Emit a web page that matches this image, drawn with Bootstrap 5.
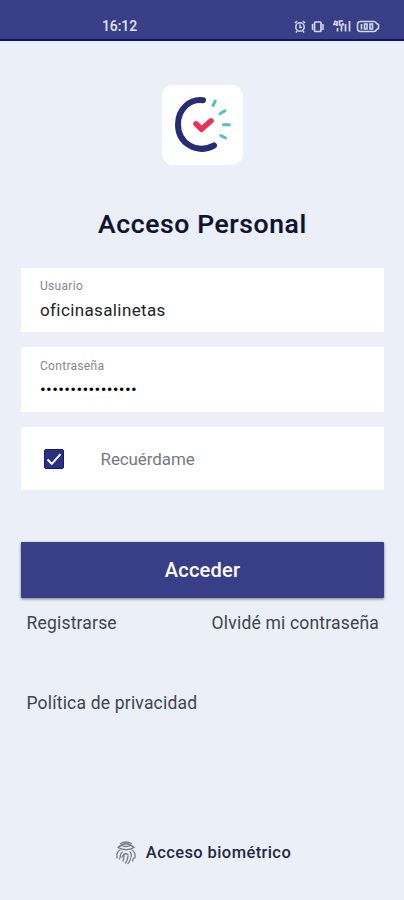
<!DOCTYPE html>
<html lang="es">
<head>
<meta charset="utf-8">
<meta name="viewport" content="width=device-width, initial-scale=1">
<title>Acceso Personal</title>
<link href="https://cdn.jsdelivr.net/npm/bootstrap@5.3.0/dist/css/bootstrap.min.css" rel="stylesheet">
<style>
body{font-family:Roboto,"Liberation Sans",sans-serif;background:#ebeff7;color:#303238;height:900px;overflow:hidden}
.status-bar{height:41px;background:#393f87;border-bottom:2px solid #120f70;color:#e2e5fa;padding:12px 24px 0 102px}
.clock{font-size:14px;line-height:29px;letter-spacing:-.1px;font-weight:500}
.status-icons{height:29px}
.app-logo{width:81px;height:80px;margin-top:44px;background:#fff;border-radius:11px}
.title{font-size:26.5px;line-height:32px;font-weight:500;letter-spacing:.62px;color:#10132e;-webkit-text-stroke:.2px #10132e;margin:43px 0 28px}
.page{padding:0 20px 0 21px}
.field{background:#fff;height:64px;padding:10px 19px 0;margin-bottom:15px}
.field + .field{height:65px;padding-top:11px}
.field label{font-size:12px;line-height:16px;color:#85878b;letter-spacing:.3px}
.field input{font-size:17px;line-height:24px;height:24px;color:#222326;letter-spacing:.38px;margin-top:4px}
.field .secret{letter-spacing:.33px;color:#000;margin-top:3px}
.remember{background:#fff;height:63px;padding:1px 23px 0}
.remember .form-check-input{width:20px;height:20px;border-radius:2px;border:1px solid #1a1875;margin:0}
.remember .form-check-input:checked{background-color:#2b3182;background-image:none}
.check-box{display:grid}
.check-box > *{grid-area:1/1}
.check-box svg{pointer-events:none;z-index:1}
.remember label{font-size:17px;letter-spacing:-.1px;color:#77797d;margin-left:36.5px;padding-top:1px}
.btn-access{height:56px;margin-top:52px;border-radius:1px;background:#393f87;color:#fff;font-size:20px;font-weight:500;letter-spacing:.2px;box-shadow:0 1px 3px #2229;--bs-btn-hover-bg:#30367b;--bs-btn-hover-color:#fff}
.links{font-size:17.5px;line-height:24px;letter-spacing:.19px;padding:0 5px 0 5.5px}
.links a,.bio{color:#424449;text-decoration:none}
.first-links{margin-top:13px}
.privacy{margin-top:56px}
.bio{margin-top:125px;padding-left:2px;font-size:16.5px;font-weight:500;line-height:26px;letter-spacing:.4px;color:#252940}
.bio svg{margin-right:10px}
</style>
</head>
<body class="d-flex flex-column">
<header class="status-bar d-flex justify-content-between flex-shrink-0">
  <span class="clock">16:12</span>
  <svg class="status-icons" width="87" height="29" viewBox="293 12 87 29" fill="none" stroke="#d5d9f4" stroke-width="1.5" aria-hidden="true">
    <circle cx="300" cy="27" r="4.2"/><path d="M300 24.500v3h2M295 23l2-2M305 23l-2-2M297 31l-1 1.500M303 31l1 1.500"/>
    <path d="M315.500 22h4.500q1 0 1 1v7.500q0 1-1 1h-4.500q-1 0-1-1v-7.500q0-1 1-1z" stroke-width="1.700"/><path d="M312.500 24v6M323 24v6"/>
    <path d="M335.500 20.500l-1.500 4h3M337 21v5M343 21h-3.500v4h3.500v-2M337.500 28v3.500M341.500 26v5.500M345.500 24v7.500M349.500 21v10.500" stroke-width="1.700"/>
    <path d="M360.500 21.500h13.500q2 0 2.500 2l2 1v4l-2 1q-.5 2-2.500 2h-13.500q-3 0-3-3v-4q0-3 3-3z"/>
    <path d="M361.500 24v5.500M364.500 24h2.500v5h-2.500zM370 24h2.500v5h-2.500z" stroke-width="1.600"/>
  </svg>
</header>
<main class="page flex-grow-1 d-flex flex-column">
  <div class="app-logo align-self-center">
    <svg class="d-block" width="81" height="80" viewBox="162 85 81 80" fill="none" stroke-linecap="round" aria-label="Logo">
      <path d="M203 100.200C190 98.500 178 109 178 124.500C178 143.500 197 154.500 214 145.500" stroke="#262c78" stroke-width="6"/>
      <path d="M196 123.800l5.500 5.500 9.500-8.500" stroke="#eb2f57" stroke-width="5.500" stroke-linejoin="round"/>
      <path d="M213 105.500l2.300-4.500M220 113.800l5-3M223.300 124.700h6M220.800 135.500l4.700 2.500" stroke="#55bfca" stroke-width="3"/>
    </svg>
  </div>
  <h1 class="title text-center">Acceso Personal</h1>
  <form>
    <div class="field"><label class="d-block" for="user">Usuario</label><input id="user" class="form-control-plaintext p-0" type="text" value="oficinasalinetas"></div>
    <div class="field"><label class="d-block" for="pass">Contraseña</label><input id="pass" class="form-control-plaintext p-0 secret" type="password" value="1234567890123456"></div>
    <div class="remember d-flex align-items-center">
      <span class="check-box flex-shrink-0"><input class="form-check-input" type="checkbox" id="remember" checked><svg width="20" height="20" viewBox="0 0 20 20" fill="none" stroke="#fff" stroke-width="2" aria-hidden="true"><path d="M3.500 10.500l4.300 4.300 8.700-9.600"/></svg></span>
      <label for="remember">Recuérdame</label>
    </div>
    <button class="btn btn-access w-100 p-0" type="button">Acceder</button>
  </form>
  <nav class="links first-links d-flex justify-content-between"><a href="#">Registrarse</a><a href="#">Olvidé mi contraseña</a></nav>
  <div class="links privacy"><a href="#">Política de privacidad</a></div>
  <a class="bio d-flex align-items-center justify-content-center" href="#">
    <svg width="20" height="24" viewBox="1 0 20 24" fill="none" stroke="#777b85" stroke-width="1.300" stroke-linecap="round" aria-hidden="true">
      <path d="M5.500 2.500Q11-.5 16.500 2.500M3 6.500Q11-1 19 6.500Q11 11 3 6.500M6 4.500q5 2 10 0M2 17v-4q1-3 3-4M20 17v-4q-1-3-3-4M4.500 18q1-1.500 1-4 0-2 2-3M8 20q1-2 1-6 2-3 4 0M7 16l2-3M10.500 22q2-2 2.500-7M13 22.500q2-2 2.500-5M15 11q2 2 1 5M17.500 20l1-3"/>
    </svg><span>Acceso biométrico</span>
  </a>
</main>
<script src="https://cdn.jsdelivr.net/npm/bootstrap@5.3.0/dist/js/bootstrap.bundle.min.js"></script>
</body>
</html>
